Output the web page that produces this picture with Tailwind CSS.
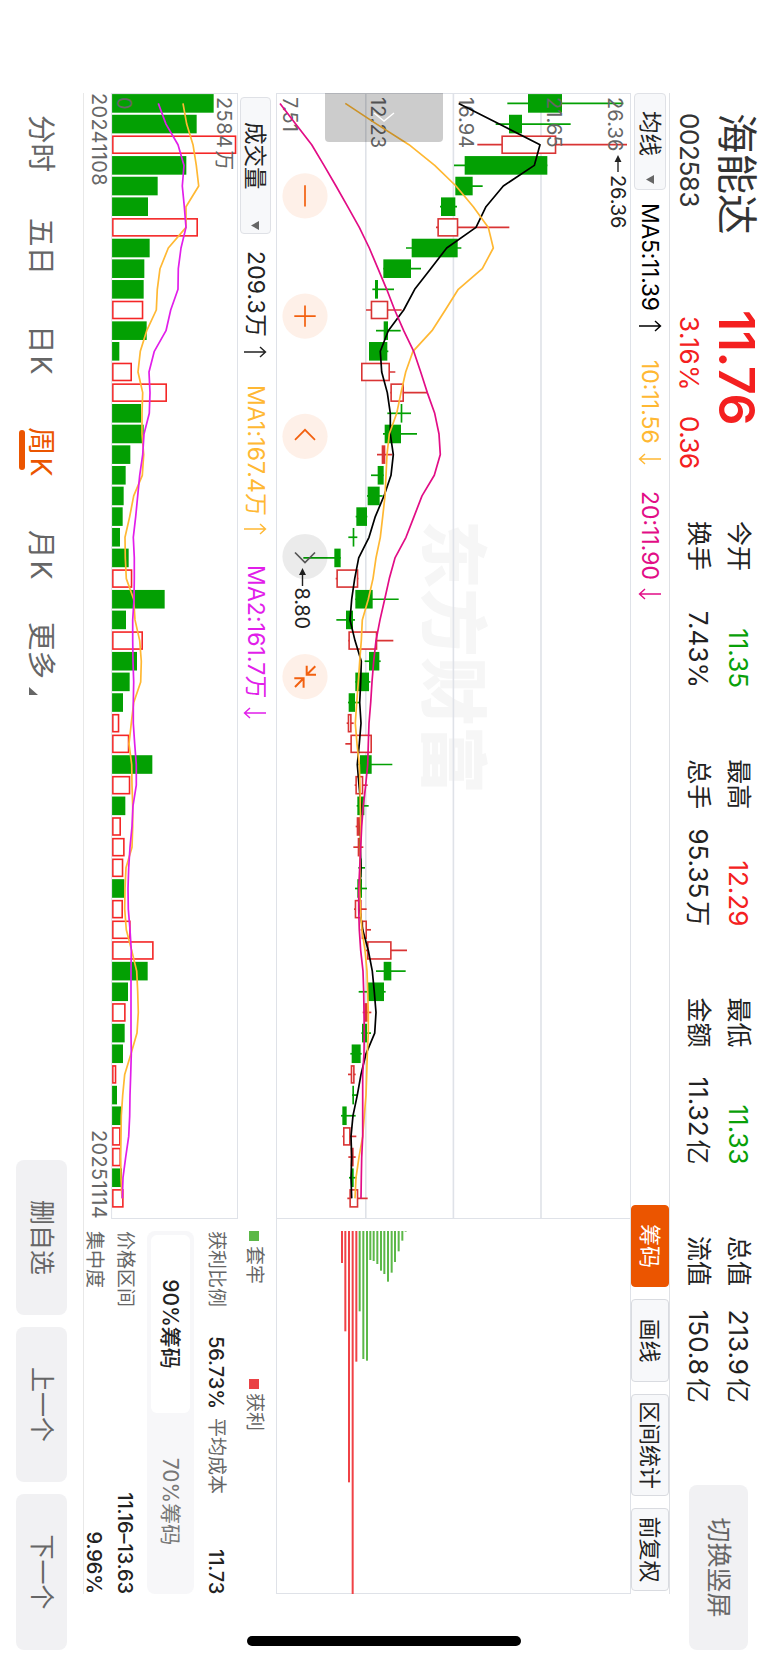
<!DOCTYPE html>
<html lang="zh-CN">
<head>
  <meta charset="UTF-8">
  <title>海能达 002583 周K</title>
  <meta name="viewport" content="width=device-width, initial-scale=1.0">
  <script src="https://cdn.jsdelivr.net/npm/@tailwindcss/browser@4"></script>
</head>
<body class="bg-white">
  <div class="relative w-[768px] h-[1663px] overflow-hidden bg-white">
    <!-- landscape screen, turned clockwise -->
    <div class="relative w-[1663px] h-[768px] origin-top-left translate-x-[768px] rotate-90 pl-[93px] font-['Inter','Noto_Sans_CJK_SC',sans-serif] text-[#222] whitespace-nowrap">

      <header class="flex h-[98px]">
        <div class="w-[217px] pl-[20px] pt-[8px]">
          <div class="text-[40.5px] leading-[48px] text-[#333]">海能达</div>
          <div class="mt-[9px] text-[26px] leading-[28px] tracking-[-0.4px] text-[#333]">002583</div>
        </div>
        <div class="w-[211px] pt-[7px] text-[#f42020]">
          <div class="text-[50px] leading-[48px] font-semibold tracking-[-0.4px]">11.76</div>
          <div class="mt-[10px] ml-[6px] flex text-[26px] leading-[28px]">
            <span class="w-[100px] tracking-[0.4px]">3.16%</span><span class="tracking-[-0.5px]">0.36</span>
          </div>
        </div>
        <div id="stats" class="grid grid-flow-col grid-rows-[40px_39px] auto-cols-[167px] gap-x-[71.3px] pt-[10px] text-[25px] leading-[39px]"></div>
        <button class="ml-[82px] mt-[20px] w-[165px] h-[59px] shrink-0 rounded-lg bg-[#f1f1f3] text-[25px] text-[#666]">切换竖屏</button>
      </header>

      <section class="flex items-center w-[1501px] h-[39px] border-t border-[#dfe1e5]">
        <div class="flex items-center w-[97px] h-[32px] rounded-[4px] border border-[#dfe1e6] bg-[#f7f8fa] pl-[17px] text-[22.5px]">
          均线<svg class="ml-[19px]" width="9" height="8"><path d="M0 0H9L4.5 8Z" fill="#666"/></svg>
        </div>
        <div class="ml-[13px] flex w-[157px] items-center text-[23px] tracking-[-0.3px] text-black">MA5:11.39<svg class="ml-[9px]" width="12" height="24" fill="none" stroke="currentColor" stroke-width="1.4"><path d="M6 23V1.5M1 7L6 1.5L11 7"/></svg></div>
        <div class="flex w-[131px] items-center text-[23px] text-[#ffb833]">10:11.56<svg class="ml-[9px]" width="12" height="24" fill="none" stroke="currentColor" stroke-width="1.4"><path d="M6 1V22.5M1 17L6 22.5L11 17"/></svg></div>
        <div class="flex items-center text-[23px] text-[#e20d86]">20:11.90<svg class="ml-[8px]" width="12" height="24" fill="none" stroke="currentColor" stroke-width="1.4"><path d="M6 1V22.5M1 17L6 22.5L11 17"/></svg></div>
        <div class="ml-auto mr-[3px] flex gap-[12px] text-[22px] leading-[36px] text-center">
          <div class="w-[82px] h-[38px] rounded-[4px] border border-[#eb5500] bg-[#eb5500] text-white">筹码</div>
          <div class="w-[83px] h-[38px] rounded-[4px] border border-[#d9dbe0] bg-[#f7f8fa]">画线</div>
          <div class="w-[102px] h-[38px] rounded-[4px] border border-[#d9dbe0] bg-[#f7f8fa]">区间统计</div>
          <div class="w-[83px] h-[38px] rounded-[4px] border border-[#d9dbe0] bg-[#f7f8fa]">前复权</div>
        </div>
      </section>

      <section class="flex w-[1501px] h-[547px]">
        <div class="w-[1126px] shrink-0">
          <svg id="price" class="block" width="1126" height="355" viewBox="93 137 1126 355"></svg>
          <div class="flex items-center h-[38px] pl-[4px] pt-[3px]">
            <div class="flex items-center w-[137px] h-[31px] rounded-[4px] border border-[#dfe1e6] bg-[#f7f8fa] pl-[24px] text-[22.5px]">
              成交量<svg class="ml-[31px]" width="9" height="8"><path d="M0 0H9L4.5 8Z" fill="#666"/></svg>
            </div>
            <div class="ml-[17px] flex w-[134px] items-center text-[23px] tracking-[0.1px]">209.3万<svg class="ml-[9px]" width="12" height="24" fill="none" stroke="currentColor" stroke-width="1.4"><path d="M6 23V1.5M1 7L6 1.5L11 7"/></svg></div>
            <div class="flex w-[180px] items-center text-[23px] tracking-[0.1px] text-[#ffb833]">MA1:167.4万<svg class="ml-[7px]" width="12" height="24" fill="none" stroke="currentColor" stroke-width="1.4"><path d="M6 23V1.5M1 7L6 1.5L11 7"/></svg></div>
            <div class="flex items-center text-[23px] tracking-[0.1px] text-[#e11eea]">MA2:161.7万<svg class="ml-[8px]" width="12" height="24" fill="none" stroke="currentColor" stroke-width="1.4"><path d="M6 1V22.5M1 17L6 22.5L11 17"/></svg></div>
          </div>
          <svg id="volume" class="block" width="1126" height="127" viewBox="93 530 1126 127"></svg>
          <div class="flex justify-between pt-[2px] text-[20px] leading-[20px] tracking-[0.3px] text-[#666]">
            <span>20241108</span><span>20251114</span>
          </div>
        </div>
        <div class="w-[375px]">
          <svg id="chips" class="block" width="375" height="355" viewBox="1219 137 375 355"></svg>
          <div class="pl-[12px] text-[19px] leading-[20px] text-[#666]">
            <div class="flex items-center pt-[12px]">
              <i class="size-[10px] bg-[#5cb848]"></i><span class="ml-[5px] w-[133px]">套牢</span>
              <i class="size-[10px] bg-[#ea4245]"></i><span class="ml-[4px]">获利</span>
            </div>
            <div class="flex pt-[18px]">
              <span class="w-[105px]">获利比例</span><b class="w-[82px] font-medium text-[20px] tracking-[-0.1px] text-[#222]">56.73%</b>
              <span>平均成本</span><b class="ml-auto font-medium text-[20px] tracking-[-0.2px] text-[#222]">11.73</b>
            </div>
            <div class="mt-[12px] flex h-[47px] rounded-lg bg-[#f7f7f9] p-[4px] text-[21px] leading-[39px] text-center">
              <div class="w-[178px] rounded-md bg-white font-medium text-[#222]">90%筹码</div>
              <div class="flex-1 text-[#777]">70%筹码</div>
            </div>
            <div class="flex justify-between pt-[12px]"><span>价格区间</span><b class="font-medium text-[20px] tracking-[-0.1px] text-[#222]">11.16–13.63</b></div>
            <div class="flex justify-between pt-[11px]"><span>集中度</span><b class="font-medium text-[20px] tracking-[-0.1px] text-[#222]">9.96%</b></div>
          </div>
        </div>
      </section>

      <footer class="flex w-[1557px] h-[84px]">
        <nav class="flex w-[1067px] border-t border-[#e8e8e8] pl-[22px] pt-[22px] text-[28.5px] leading-[40px] text-[#666]">
          <span class="w-[103px]">分时</span>
          <span class="w-[107px]">五日</span>
          <span class="w-[102px]">日<span class="ml-[2px]">K</span></span>
          <span class="relative w-[103px] text-[#eb5500]">周<span class="ml-[2px]">K</span><i class="absolute left-[3px] top-[36px] w-[40px] h-[6px] rounded-full bg-[#eb5500]"></i></span>
          <span class="w-[92px]">月<span class="ml-[2px]">K</span></span>
          <span>更多</span>
          <svg class="ml-[8px] mt-[23px]" width="8" height="9"><path d="M8 0V9H0Z" fill="#666"/></svg>
        </nav>
        <div class="w-[434px] border-t border-[#e8e8e8] pt-[16px] flex gap-[12px] text-[25px] leading-[51px] text-center text-[#666]">
          <div class="w-[155px] h-[51px] shrink-0 rounded-lg bg-[#f1f1f3]">删自选</div>
          <div class="w-[155px] h-[51px] shrink-0 rounded-lg bg-[#f1f1f3]">上一个</div>
          <div class="w-[156px] h-[51px] shrink-0 rounded-lg bg-[#f1f1f3]">下一个</div>
        </div>
      </footer>

      <div class="absolute left-[1636px] top-[247px] w-[10px] h-[274px] rounded-full bg-black"></div>
    </div>
  </div>

  <script>
    const UP = '#d93434', DOWN = '#03a003', VOL_UP = '#f42626';
    const STEP = 20.66, FIRST = 103.4;
    const cx = i => FIRST + i * STEP;

    const stats = [
      ['今开', '11.35', '', 'text-[#08a008]'], ['换手', '7.43%', '', ''],
      ['最高', '12.29', '', 'text-[#f42020]'], ['总手', '95.35', '万', ''],
      ['最低', '11.33', '', 'text-[#08a008]'], ['金额', '11.32', '亿', ''],
      ['总值', '213.9', '亿', ''], ['流值', '150.8', '亿', '']
    ];
    document.getElementById('stats').innerHTML = stats.map(([k, v, unit, c]) =>
      `<div class="flex justify-between"><span>${k}</span><span class="text-[26px] ${c}">${v}${unit && `<span class="ml-[3px] text-[25px]">${unit}</span>`}</span></div>`).join('');

    // body low, body high, wick low, wick high, direction (levels in 1/3 px)
    const candles = [
      [804,906,742,1090,0],[747,786,707,932,0],[724,889,652,1101,1],[614,862,582,862,0],[586,638,586,668,0],
      [543,586,540,591,0],[532,595,528,748,1],[455,593,438,604,0],[370,453,370,483,0],[345,354,337,402,0],
      [332,385,318,425,1],[371,384,348,422,0],[327,382,327,385,0],[303,390,303,406,1],[391,432,391,502,1],
      [422,427,382,453,0],[374,423,369,471,0],[365,376,351,397,1],[353,371,333,371,0],[323,359,321,368,0],
      [289,321,287,322,0],[278,283,265,292,0],[223,242,130,242,0],[229,295,227,295,1],[286,338,286,416,0],
      [258,279,229,285,0],[265,352,265,400,1],[327,358,314,362,0],[286,327,286,331,0],[266,285,264,297,0],
      [263,275,260,281,1],[271,336,256,336,1],[300,335,295,397,0],[286,310,284,323,1],[292,313,290,326,0],
      [290,301,287,304,1],[293,303,280,310,1],[298,305,295,315,0],[292,306,285,321,0],[284,305,282,320,1],
      [305,321,302,333,1],[321,395,318,441,1],[371,394,348,437,0],[323,372,296,377,0],[313,323,308,334,1],
      [306,321,304,333,0],[275,302,271,305,0],[272,284,264,287,1],[277,282,276,291,0],[247,260,243,287,0],
      [249,272,247,289,1],[272,281,265,287,1],[273,281,267,290,0],[268,295,262,323,1]
    ];
    const ma5 = [596,718,840,823,730,678,648,560,512,464,431,385,361,365,382,391,391,400,393,372,346,327,296,284,275,270,285,304,302,299,303,298,292,297,303,302,301,303,300,299,308,325,337,343,348,344,318,303,292,279,273,275,273,275];
    const ma10 = [256,350,447,524,588,640,685,700,667,595,556,516,459,437,423,410,388,381,378,375,368,361,348,339,325,307,304,299,295,290,286,291,298,300,301,302,301,300,299,301,306,315,321,323,325,325,322,320,318,313,308,297,288,285];
    const ma20 = [60,107,155,192,228,263,298,328,354,380,404,431,461,482,502,524,537,541,523,486,462,438,405,388,374,360,348,341,336,332,327,325,323,317,310,305,302,299,296,296,298,302,309,311,312,313,312,308,308,308,308,305,304,303];

    const vols = [641,590,709,559,473,444,594,449,433,431,430,440,358,396,501,423,431,391,377,371,368,360,386,397,494,378,429,411,389,369,358,388,457,391,376,363,374,370,373,369,392,461,443,384,377,374,369,349,351,363,362,363,366,371];
    const volUp = [2,6,10,13,14,23,26,30,31,33,35,36,37,39,40,41,44,47,50,51,53];
    const vma1 = [549,560,579,589,596,558,558,505,480,472,469,440,421,414,428,426,426,431,427,401,389,375,376,379,401,405,419,424,422,401,394,387,395,396,398,398,396,378,375,374,379,395,410,413,415,411,393,374,368,364,363,362,363,366];
    const vma2 = [475,498,534,552,547,553,558,543,535,534,512,498,463,447,450,448,432,428,419,413,407,400,403,403,402,398,398,399,401,400,400,404,409,409,399,396,390,386,384,385,390,394,393,393,393,393,394,392,390,389,386,377,369,367];

    const py = v => 508 - v / 3;
    const vy = v => 768 - v / 3;
    const line = (arr, y, color) => `<polyline fill="none" stroke="${color}" stroke-width="1.7" stroke-linejoin="round" points="${arr.map((v, i) => cx(i).toFixed(1) + ',' + y(v).toFixed(1)).join(' ')}"/>`;
    const rule = (x1, y1, x2, y2, w = 1) => `<path d="M${x1} ${y1}L${x2} ${y2}" stroke="#dfe2e8" stroke-width="${w}"/>`;
    const text = (x, y, s, color = '#666', gap = 0.1) => `<text x="${x}" y="${y}" font-size="20" letter-spacing="${gap}" fill="${color}">${s}</text>`;

    function box(i, top, bottom, up, color) {
      const x = cx(i) - 9.3, h = bottom - top;
      if (!up || h < 3.8) return `<rect x="${x}" y="${top}" width="18.6" height="${h}" fill="${color}"/>`;
      return `<rect x="${x + 0.8}" y="${top + 0.8}" width="17" height="${h - 1.6}" fill="#fff" stroke="${color}" stroke-width="1.6"/>`;
    }

    function drawPrice() {
      let s = `<text x="520" y="340" font-size="68.5" font-weight="900" fill="#f6f6f6">东方财富</text>`;
      s += rule(93, 137.5, 1219, 137.5) + rule(93, 491.5, 1219, 491.5) + rule(93.5, 137, 93.5, 492) + rule(1218.5, 137, 1218.5, 492);
      [402.2, 314.6, 227].forEach(y => s += rule(93, y, 1219, y, 1.6));
      candles.forEach(([lo, hi, wl, wh, up], i) => {
        const c = up ? UP : DOWN;
        s += `<path d="M${cx(i)} ${py(wl)}V${py(wh)}" stroke="${c}" stroke-width="1.7"/>` + box(i, py(hi), py(lo), up, c);
      });
      s += text(97, 160, '26.36') + text(97, 221, '21.65') + text(97, 309.5, '16.94') + text(97, 397.5, '12.23') + text(97, 485.5, '7.51');
      s += line(ma5, py, '#000') + line(ma10, py, '#ffb833') + line(ma20, py, '#e20d86');
      s += `<path d="M159 150H172M572 465.5H586" stroke="#222" stroke-width="1.4"/><path d="M155 150L162 146.5V153.5ZM568 465.5L575 462V469Z" fill="#222"/>`;
      s += text(175, 157.5, '26.36', '#222', -0.1) + text(587.5, 473, '8.80', '#222', -0.2);
      // scroll handle
      s += `<path d="M93 325H138Q142 325 142 329V439Q142 443 138 443H93Z" fill="#000" fill-opacity=".2"/><path d="M113 374L121 384L113 394" fill="none" stroke="#fff" stroke-width="1.4"/>`;
      // round controls
      const icons = ['M-10.7 0H10.7', 'M-10.7 0H10.7M0-10.7V10.7', 'M3.5-10L-6.5 0L3.5 10', 'M-4-10L6 0L-4 10',
        'M-2-11V-1.7H-11M-2-1.7L-10.5-10.3M1.6 10.7V1.4H11M1.6 1.4L10.3 10'];
      icons.forEach((d, i) => {
        const gray = i === 3;
        s += `<g transform="translate(${195.9 + i * 120.2} 463)"><circle r="22.6" fill="${gray ? '#000' : '#f96a1f'}" fill-opacity="${gray ? .08 : .1}"/><path d="${d}" fill="none" stroke="${gray ? '#555' : '#f2600f'}" stroke-width="${i === 4 ? 2 : 1.7}"/></g>`;
      });
      document.getElementById('price').innerHTML = s;
    }

    function drawVolume() {
      let s = rule(93, 530.5, 1219, 530.5) + rule(93.5, 530, 93.5, 656) + rule(1218.5, 530, 1218.5, 656);
      vols.forEach((v, i) => {
        const up = volUp.includes(i);
        s += box(i, vy(v), 656, up, up ? VOL_UP : DOWN);
      });
      s += rule(93, 656.4, 1219, 656.4);
      s += text(97, 551, '2584<tspan dx="2">万</tspan>', '#666', 0.4) + text(97, 651, '0');
      s += line(vma1, vy, '#ffb833') + line(vma2, vy, '#e11eea');
      document.getElementById('volume').innerHTML = s;
    }

    function drawChips() {
      // level, end of bar
      const red = [[246,249],[256,454],[267,907],[278,1242],[289,545]];
      const green = [[299,394],[310,537],[321,542],[331,240],[341,243],[352,252],[363,272],[373,282],[384,305],[395,278],[405,246],[416,214],[427,182],[437,155]];
      const bar = c => ([v, e]) => `<rect x="1231" y="${py(v) - 1}" width="${(e - 153) / 3}" height="2" fill="${c}"/>`;
      let s = rule(1219, 137.5, 1594, 137.5) + rule(1219, 491.5, 1594, 491.5) + rule(1593.5, 137, 1593.5, 492);
      s += red.map(bar('#f04246')).join('') + green.map(bar('#5cb848')).join('');
      document.getElementById('chips').innerHTML = s;
    }

    drawPrice();
    drawVolume();
    drawChips();
  </script>
</body>
</html>
